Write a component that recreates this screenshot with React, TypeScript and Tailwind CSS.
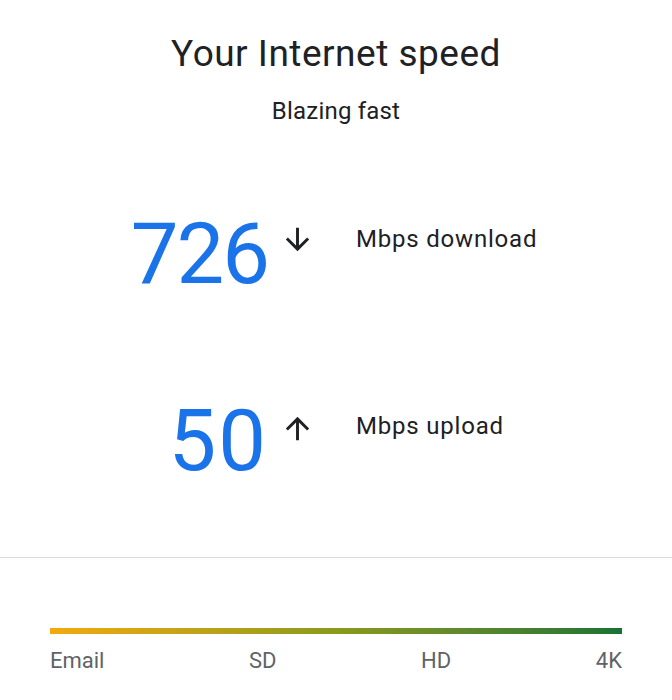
import React from 'react';

// material arrow, filled outline
const Arrow = ({ up }: { up?: boolean }) => (
  <svg className={`w-[35px] h-[35px] text-[#202124] ${up ? 'rotate-180' : ''}`} viewBox="0 0 24 24" fill="currentColor">
    <path d="M20 12l-1.41-1.41L13 16.17V4h-2v12.17l-5.58-5.59L4 12l8 8 8-8z" />
  </svg>
);

const SpeedRow = ({ value, label, up }: { value: string; label: string; up?: boolean }) => (
  <div className="grid grid-cols-[268px_88px_1fr] items-start">
    <div className={`text-right text-[85px] leading-none text-[#1a73e8] ${up ? 'tracking-[2px]' : 'tracking-[-2px]'}`}>{value}</div>
    <div className={`pl-[12px] ${up ? 'pt-[12px]' : 'pt-[10px]'}`}>
      <Arrow up={up} />
    </div>
    <div className="pt-[12px] text-[24px] leading-[30px] tracking-[0.8px] text-[#202124]">{label}</div>
  </div>
);

export default function App() {
  return (
    <div className="w-[672px] h-[700px] bg-white font-['Roboto',sans-serif] overflow-hidden">
      <div className="pt-[32px] text-center text-[#202124]">
        <h1 className="text-[37px] leading-[44px] tracking-[0.5px]">Your Internet speed</h1>
        <p className="mt-[20px] text-[24px] leading-[30px] tracking-[0.2px]">Blazing fast</p>
      </div>

      <div className="mt-[86px] flex flex-col gap-[102px]">
        <SpeedRow value="726" label="Mbps download" />
        <SpeedRow value="50" label="Mbps upload" up />
      </div>

      <div className="mt-[73px] border-t border-[#dadce0]" />

      <div className="px-[50px] pt-[70px]">
        <div className="h-[6px] bg-gradient-to-r from-[#f4a90c] via-[#8a9a1c] to-[#137333]" />
        <div className="mt-[13px] flex justify-between text-[22px] leading-[28px] text-[#5f6368]">
          <span>Email</span>
          <span>SD</span>
          <span>HD</span>
          <span>4K</span>
        </div>
      </div>
    </div>
  );
}
